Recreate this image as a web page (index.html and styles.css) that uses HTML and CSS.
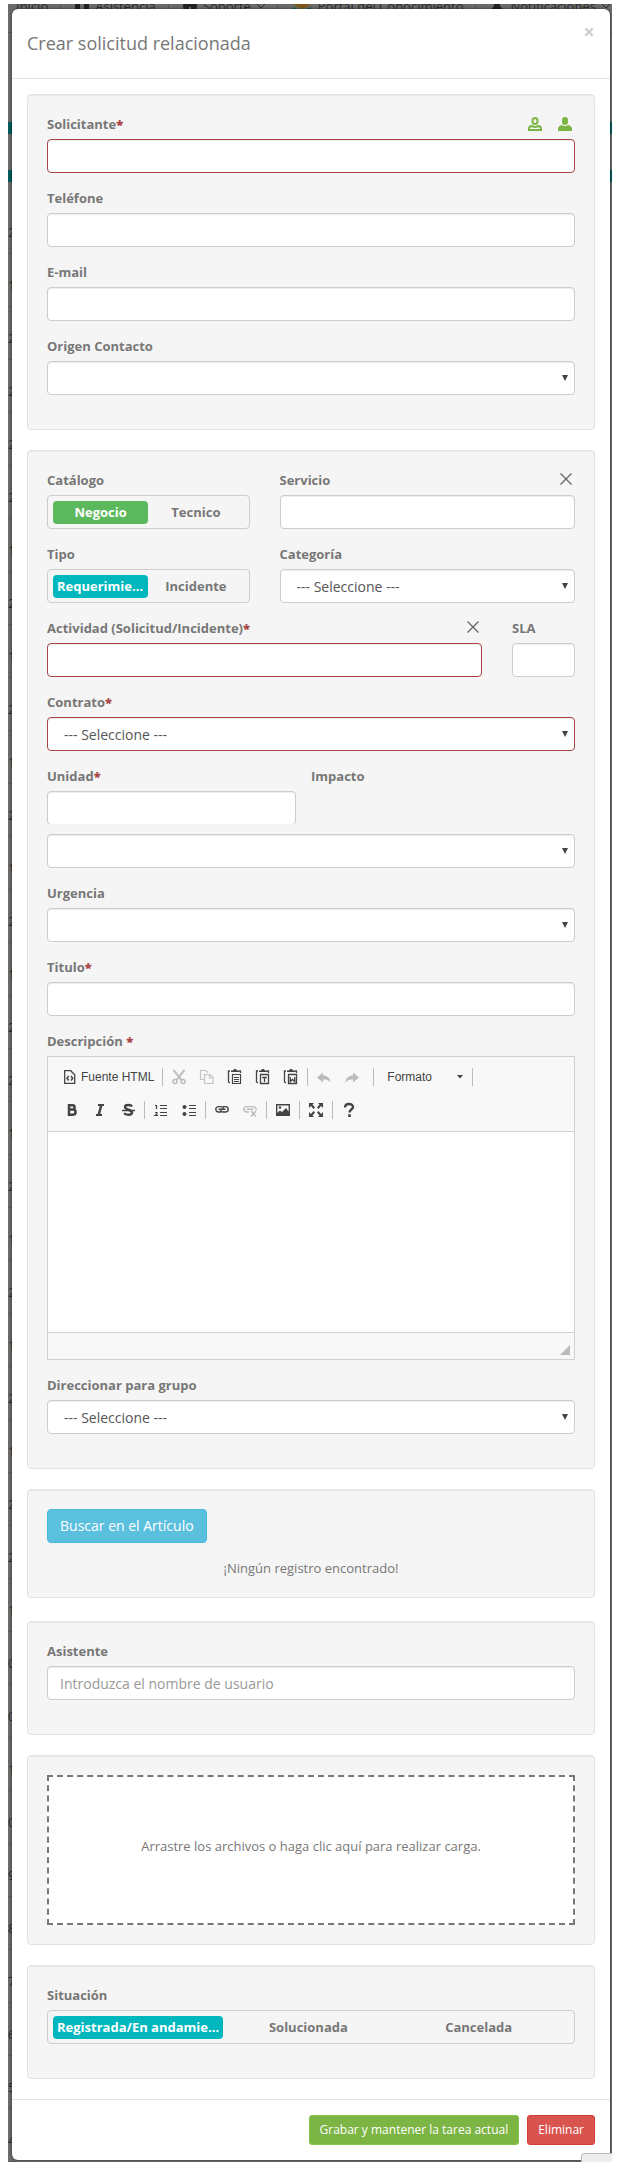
FILE: index.html
```html
<!DOCTYPE html>
<html lang="es">
<head>
<meta charset="utf-8">
<meta name="viewport" content="width=device-width, initial-scale=1">
<title>Crear solicitud relacionada</title>
<link rel="stylesheet" href="styles.css">
</head>
<body>
<div class="screen">
  <div class="backdrop" aria-hidden="true">
    <div class="nav">
      <span class="nav-item">Inicio</span>
      <span class="nav-item"><svg width="14" height="14" viewBox="0 0 14 14"><path d="M0 0h5v14H0zM9 0h5v14H9z" fill="#222"/></svg>Asistencia</span>
      <span class="nav-item"><svg width="14" height="14" viewBox="0 0 14 14"><circle cx="7" cy="7" r="7" fill="#222"/><path d="M7 8v4" stroke="#777" stroke-width="2"/></svg>Soporte<svg width="8" height="5" viewBox="0 0 8 5"><path d="M0 0l4 4 4-4" fill="none" stroke="#2b2b2b"/></svg></span>
      <span class="nav-item"><svg width="20" height="14" viewBox="0 0 20 14"><path d="M1 6l9 4 9-4-9-3z" fill="#7c5a1c"/><path d="M1 8l9 4 9-4v2l-9 4-9-4z" fill="#1a5c4a"/></svg>Portal del Conocimiento</span>
      <span class="nav-item"><svg width="14" height="14" viewBox="0 0 14 14"><path d="M4 0h6v7l4 5H0l4-5z" fill="#222"/></svg>Notificaciones<svg width="8" height="5" viewBox="0 0 8 5"><path d="M0 0l4 4 4-4" fill="none" stroke="#2b2b2b"/></svg></span>
    </div>
    <div class="band"></div>
    <div class="band"></div>
    <div class="rows">
      <span>2</span><span>1</span><span>2</span><span>2</span><span>2</span><span>2</span><span>1</span><span>2</span><span>1</span><span>2</span><span>1</span><span>2</span><span>1</span><span>2</span><span>1</span><span>2</span><span>2</span><span>1</span><span>2</span><span>1</span><span>2</span><span>1</span><span>2</span><span>1</span><span>2</span><span>2</span><span>1</span><span>0</span><span>0</span><span>1</span><span>0</span><span>9</span><span>8</span><span>7</span><span>6</span><span>5</span><span>4</span>
    </div>
  </div>

  <main class="modal" role="dialog" aria-labelledby="title">
    <header class="modal-header">
      <h1 id="title">Crear solicitud relacionada</h1>
      <button class="close" type="button" aria-label="Cerrar">×</button>
    </header>

    <form class="modal-body">
      <section class="well">
        <div class="field">
          <div class="label-row">
            <label for="solicitante">Solicitante<b class="req">*</b></label>
            <span class="tools">
              <button type="button" class="icon-btn" aria-label="Nuevo solicitante"><svg width="14" height="14" viewBox="0 0 14 14" fill="none" stroke="#7cb544" stroke-width="2"><rect x="4.5" y="1" width="5" height="6" rx="2.5"/><path d="M1 13v-1.500c0-1.500 1.500-2.500 3-2.500.8.700 1.800 1 3 1s2.200-.3 3-1c1.500 0 3 1 3 2.500V13z"/></svg></button>
              <button type="button" class="icon-btn" aria-label="Ver solicitante"><svg width="14" height="14" viewBox="0 0 14 14" fill="#7cb544"><rect x="4" y="0" width="6" height="8" rx="3"/><path d="M0 14v-2c0-2 1.500-3.500 4-4 .8.800 1.800 1 3 1s2.200-.2 3-1c2.500.5 4 2 4 4v2z"/></svg></button>
            </span>
          </div>
          <input class="control invalid" id="solicitante" type="text">
        </div>
        <div class="field">
          <label for="telefono">Teléfone</label>
          <input class="control" id="telefono" type="text">
        </div>
        <div class="field">
          <label for="email">E-mail</label>
          <input class="control" id="email" type="text">
        </div>
        <div class="field">
          <label for="origen">Origen Contacto</label>
          <div class="select"><select class="control" id="origen"><option></option></select></div>
        </div>
      </section>

      <section class="well">
        <div class="grid">
          <fieldset class="field span-5">
            <legend>Catálogo</legend>
            <div class="switch halves">
              <label><input type="radio" name="catalogo" checked><span class="green">Negocio</span></label>
              <label><input type="radio" name="catalogo"><span>Tecnico</span></label>
            </div>
          </fieldset>
          <div class="field span-7">
            <div class="label-row">
              <label for="servicio">Servicio</label>
              <button type="button" class="icon-btn clear" aria-label="Limpiar servicio"><svg width="12" height="12" viewBox="0 0 12 12" stroke="#666" stroke-width="1.300"><path d="M.5.500l11 11M11.500.500l-11 11"/></svg></button>
            </div>
            <input class="control" id="servicio" type="text">
          </div>
          <fieldset class="field span-5">
            <legend>Tipo</legend>
            <div class="switch halves">
              <label><input type="radio" name="tipo" checked><span class="teal">Requerimiento</span></label>
              <label><input type="radio" name="tipo"><span>Incidente</span></label>
            </div>
          </fieldset>
          <div class="field span-7">
            <label for="categoria">Categoría</label>
            <div class="select"><select class="control" id="categoria"><option>--- Seleccione ---</option></select></div>
          </div>
          <div class="field span-10">
            <div class="label-row">
              <label for="actividad">Actividad (Solicitud/Incidente)<b class="req">*</b></label>
              <button type="button" class="icon-btn clear" aria-label="Limpiar actividad"><svg width="12" height="12" viewBox="0 0 12 12" stroke="#666" stroke-width="1.300"><path d="M.5.500l11 11M11.500.500l-11 11"/></svg></button>
            </div>
            <input class="control invalid" id="actividad" type="text">
          </div>
          <div class="field span-2">
            <label for="sla">SLA</label>
            <input class="control" id="sla" type="text">
          </div>
        </div>
        <div class="field">
          <label for="contrato">Contrato<b class="req">*</b></label>
          <div class="select"><select class="control invalid" id="contrato"><option>--- Seleccione ---</option></select></div>
        </div>
        <div class="grid unit-row">
          <div class="span-6">
            <label for="unidad">Unidad<b class="req">*</b></label>
            <div class="clip"><input class="control" id="unidad" type="text"></div>
          </div>
          <label class="span-6 impact" for="impacto">Impacto</label>
        </div>
        <div class="field">
          <div class="select"><select class="control" id="impacto"><option></option></select></div>
        </div>
        <div class="field">
          <label for="urgencia">Urgencia</label>
          <div class="select"><select class="control" id="urgencia"><option></option></select></div>
        </div>
        <div class="field">
          <label for="titulo">Titulo<b class="req">*</b></label>
          <input class="control" id="titulo" type="text">
        </div>
        <div class="field">
          <label for="descripcion">Descripción <b class="req">*</b></label>
          <div class="editor">
            <div class="toolbar">
              <div class="tools-row">
                <button type="button" class="tool source"><svg viewBox="0 0 16 16"><path d="M.7 1.700h6l4 4v8.600H.7z" fill="none" stroke="#444" stroke-width="1.300"/><path d="M4.700 7L3 9.200l1.700 2.300M7 7l1.700 2.200L7 11.500" fill="none" stroke="#444" stroke-width="1.500"/></svg>Fuente HTML</button>
                <i class="sep"></i>
                <button type="button" class="tool" aria-label="Cortar" disabled><svg viewBox="0 0 16 16"><path d="M2.500 1l8 10M13.500 1l-8 10" fill="none" stroke="#bbb" stroke-width="2"/><circle cx="4" cy="12.500" r="2" fill="none" stroke="#bbb" stroke-width="1.500"/><circle cx="12" cy="12.500" r="2" fill="none" stroke="#bbb" stroke-width="1.500"/></svg></button>
                <button type="button" class="tool" aria-label="Copiar" disabled><svg viewBox="0 0 16 16"><path d="M5 10.500H1.500v-9H7l2 2M5.500 5.500H11l3 3v6H5.500zM10.500 5.500v3.500H14" fill="none" stroke="#c4c4c4" stroke-width="1.200"/></svg></button>
                <button type="button" class="tool" aria-label="Pegar"><svg viewBox="0 0 16 16"><path d="M3 2H1.500v11L3 14M12 2h1.500v2" fill="none" stroke="#444" stroke-width="1.300"/><path d="M4 3V1.500h2L7 0h2l1 1.500h2V3z" fill="#444"/><path d="M5.500 5.500h8v9h-8zM7 8.500h5M7 10.500h5M7 12.500h5" fill="none" stroke="#444" stroke-width="1.200"/></svg></button>
                <button type="button" class="tool" aria-label="Pegar como texto"><svg viewBox="0 0 16 16"><path d="M3 2H1.500v11L3 14M12 2h1.500v2" fill="none" stroke="#444" stroke-width="1.300"/><path d="M4 3V1.500h2L7 0h2l1 1.500h2V3z" fill="#444"/><path d="M5.500 5.500h8v9h-8zM7.200 8.500h4.600M9.500 8.500V13" fill="none" stroke="#444" stroke-width="1.300"/></svg></button>
                <button type="button" class="tool" aria-label="Pegar desde Word"><svg viewBox="0 0 16 16"><path d="M3 2H1.500v11L3 14M12 2h1.500v2" fill="none" stroke="#444" stroke-width="1.300"/><path d="M4 3V1.500h2L7 0h2l1 1.500h2V3z" fill="#444"/><path d="M5.500 5.500h8v9h-8zM7.300 8v4.500l2.200-2 2.200 2V8" fill="none" stroke="#444" stroke-width="1.300"/></svg></button>
                <i class="sep"></i>
                <button type="button" class="tool" aria-label="Deshacer" disabled><svg viewBox="0 0 16 16"><path d="M1 8.500l6-5v3c4 0 7 2 7.500 7-2-2.500-4-3-7.500-3v3z" fill="#bbb"/></svg></button>
                <button type="button" class="tool" aria-label="Rehacer" disabled><svg viewBox="0 0 16 16"><path d="M15 8.500l-6-5v3c-4 0-7 2-7.500 7 2-2.500 4-3 7.500-3v3z" fill="#bbb"/></svg></button>
                <i class="sep wide"></i>
                <button type="button" class="combo">Formato<svg width="6" height="4" viewBox="0 0 6 4"><path d="M0 0h6L3 3.500z" fill="#444"/></svg></button>
                <i class="sep"></i>
              </div>
              <div class="tools-row">
                <button type="button" class="tool" aria-label="Negrita"><svg viewBox="0 0 16 16"><path d="M5 3.200h3.500a2 2 0 0 1 0 4.300H5h4a2.500 2.500 0 0 1 0 5.200H5z" fill="none" stroke="#444" stroke-width="2.500"/></svg></button>
                <button type="button" class="tool" aria-label="Cursiva"><svg viewBox="0 0 16 16"><path d="M6 3h6M4 13h6" stroke="#444" stroke-width="1.800"/><path d="M9.300 3L6.700 13" stroke="#444" stroke-width="2.500"/></svg></button>
                <button type="button" class="tool" aria-label="Tachado"><svg viewBox="0 0 16 16"><path d="M12 4.500C11 2.500 5 2.300 5 5c0 3 7 2.500 7 5.500 0 3-6.500 3-7.800.5" fill="none" stroke="#444" stroke-width="2.400"/><path d="M2 8.500h13" stroke="#444" stroke-width="1.500"/></svg></button>
                <i class="sep"></i>
                <button type="button" class="tool" aria-label="Lista numerada"><svg viewBox="0 0 16 16"><path d="M7 3.500h7M7 6.500h7M7 10.500h7M7 13.500h7M2 3.500h1.500V7M2 10.500h2v1.500l-2 1.500h3" fill="none" stroke="#444" stroke-width="1.200"/></svg></button>
                <button type="button" class="tool" aria-label="Lista con viñetas"><svg viewBox="0 0 16 16"><path d="M8 3.500h7M8 6.500h7M8 10.500h7M8 13.500h7" stroke="#444" stroke-width="1.200"/><circle cx="3.500" cy="5" r="2" fill="#444"/><circle cx="3.500" cy="12" r="2" fill="#444"/></svg></button>
                <i class="sep"></i>
                <button type="button" class="tool" aria-label="Vínculo"><svg viewBox="0 0 16 16"><path d="M7 10H4.500a2.700 2.700 0 0 1 0-5.400H7c1.500 0 2.200 1 2.200 2M9 4.600h2.500a2.700 2.700 0 0 1 0 5.400H9c-1.500 0-2.200-1-2.200-2M4.500 7.300h7" fill="none" stroke="#444" stroke-width="1.400"/></svg></button>
                <button type="button" class="tool" aria-label="Quitar vínculo" disabled><svg viewBox="0 0 16 16"><path d="M7 10H4.500a2.700 2.700 0 0 1 0-5.400h7a2.700 2.700 0 0 1 2.500 3.500M4.500 7.300h7" fill="none" stroke="#bbb" stroke-width="1.400"/><path d="M9 9l5 5.500M14 9l-5 5.500" stroke="#bbb" stroke-width="1.500"/></svg></button>
                <i class="sep"></i>
                <button type="button" class="tool" aria-label="Imagen"><svg viewBox="0 0 16 16"><path d="M1.700 2.700h12.600v10.600H1.700z" fill="none" stroke="#444" stroke-width="1.400"/><path d="M2 13v-2l3-2.500 2 1.500 4-4 3 4v3z" fill="#444"/><circle cx="5" cy="5.500" r="1.200" fill="#444"/></svg></button>
                <i class="sep"></i>
                <button type="button" class="tool" aria-label="Maximizar"><svg viewBox="0 0 16 16"><path d="M1 1h5L4.500 2.500 7 5.500 5.500 7 3 4 1 6zM15 1v5l-2-2-2.500 3L9 5.500l2.500-3L10 1zM1 15v-5l2 2 2.500-3L7 10.500l-2.500 3L6 15zM15 15h-5l1.500-1.500L9 10.500 10.500 9l2.500 3 2-2z" fill="#444"/></svg></button>
                <i class="sep"></i>
                <button type="button" class="tool" aria-label="Ayuda"><svg viewBox="0 0 16 16"><path d="M4 5.500C4 1 12 1 12 5c0 2.500-3.500 2.500-3.500 5.500" fill="none" stroke="#444" stroke-width="2.400"/><path d="M7.200 12.200h2.600V15H7.200z" fill="#444"/></svg></button>
              </div>
            </div>
            <textarea class="editor-text" id="descripcion"></textarea>
            <div class="editor-foot"><svg width="10" height="10" viewBox="0 0 10 10"><path d="M10 0v10H0z" fill="#bbb"/></svg></div>
          </div>
        </div>
        <div class="field">
          <label for="grupo">Direccionar para grupo</label>
          <div class="select"><select class="control" id="grupo"><option>--- Seleccione ---</option></select></div>
        </div>
      </section>

      <section class="well articles">
        <button type="button" class="btn info">Buscar en el Artículo</button>
        <p class="empty">¡Ningún registro encontrado!</p>
      </section>

      <section class="well">
        <div class="field">
          <label for="asistente">Asistente</label>
          <input class="control" id="asistente" type="text" placeholder="Introduzca el nombre de usuario">
        </div>
      </section>

      <section class="well">
        <button type="button" class="dropzone">Arrastre los archivos o haga clic aquí para realizar carga.</button>
      </section>

      <section class="well">
        <fieldset class="field">
          <legend>Situación</legend>
          <div class="switch thirds">
            <label><input type="radio" name="situacion" checked><span class="teal">Registrada/En andamiento</span></label>
            <label><input type="radio" name="situacion"><span>Solucionada</span></label>
            <label><input type="radio" name="situacion"><span>Cancelada</span></label>
          </div>
        </fieldset>
      </section>
    </form>

    <footer class="modal-footer">
      <button type="button" class="btn small success">Grabar y mantener la tarea actual</button>
      <button type="button" class="btn small danger">Eliminar</button>
    </footer>
  </main>
  <div class="corner" aria-hidden="true"></div>
</div>
</body>
</html>
```
FILE: styles.css
```css
* { box-sizing: border-box; }

body {
  margin: 0;
  padding: 4px 8px 6px;
  background: #fff;
  color: #777;
  font: 13px/20px "Open Sans", "Noto Sans", sans-serif;
}

button, input, select, textarea { font: inherit; color: inherit; }
button { margin: 0; padding: 0; border: 0; background: none; cursor: pointer; }

/* dimmed page behind the dialog */
.screen {
  position: relative;
  overflow: hidden;
  padding: 5px 2px 2px 4px;
  background: #6b6b6b;
}
.backdrop {
  position: absolute;
  inset: 0;
  overflow: hidden;
  color: #2b2b2b;
}
.nav {
  display: flex;
  height: 37px;
  margin-top: -8px;
  padding-left: 8px;
  border-bottom: 1px solid #555;
  white-space: nowrap;
}
.nav-item {
  display: flex;
  flex: none;
  align-items: center;
  gap: 6px;
  height: 20px;
  margin-right: 14px;
  padding-right: 12px;
  border-right: 1px solid #555;
}
.band { height: 12px; margin-top: 89px; background: #005a5c; }
.band + .band { margin-top: 36px; }
.rows {
  display: flex;
  flex-direction: column;
  justify-content: space-between;
  width: 8px;
  height: calc(100% - 178px);
  padding-top: 40px;
}
.rows span { border-bottom: 1px solid #5c5c5c; height: 32px; }

/* dialog */
.modal {
  position: relative;
  background: #fff;
  border-radius: 6px;
  box-shadow: 0 0 3px rgba(0, 0, 0, .6);
}
.modal-header {
  display: flex;
  justify-content: space-between;
  align-items: flex-start;
  padding: 14px 15px 15px;
  border-bottom: 1px solid #e5e5e5;
}
h1 { margin: 0; font-size: 18px; font-weight: 400; line-height: 40px; }
.close { width: 12px; color: #ccc; font-size: 20px; font-weight: 700; line-height: 18px; }
.modal-body { padding: 15px 15px 20px; }
.modal-footer {
  display: flex;
  justify-content: flex-end;
  gap: 8px;
  padding: 15px;
  border-top: 1px solid #e5e5e5;
}

.well {
  margin-bottom: 20px;
  padding: 19px;
  background: #f5f5f5;
  border: 1px solid #e3e3e3;
  border-radius: 4px;
  box-shadow: inset 0 1px 1px rgba(0, 0, 0, .05);
}
.well:last-child { margin-bottom: 0; }
.articles { margin-bottom: 23px; }

/* form fields */
.field { min-width: 0; margin: 0 0 15px; padding: 0; border: 0; }
label, legend {
  display: block;
  margin-bottom: 5px;
  padding: 0;
  font-weight: 700;
}
.req { color: #a94442; }
.label-row { display: flex; justify-content: space-between; }
.tools { display: flex; gap: 16px; padding-right: 3px; }
.icon-btn { display: flex; align-items: center; height: 20px; }
.clear { height: 18px; padding-right: 3px; }
.control {
  display: block;
  width: 100%;
  height: 34px;
  padding: 6px 12px;
  background: #fff;
  border: 1px solid #ccc;
  border-radius: 4px;
  box-shadow: inset 0 1px 1px rgba(0, 0, 0, .075);
  color: #555;
  font-size: 14px;
  line-height: 20px;
}
.control::placeholder { color: #999; }
.invalid { border-color: #a94442; }
.select { position: relative; }
.select .control { appearance: none; padding: 7px 16px 5px; }
.select::after {
  content: "";
  position: absolute;
  top: 14px;
  right: 7px;
  border: solid transparent;
  border-width: 6px 3px 0;
  border-top-color: #444;
  pointer-events: none;
}
.grid { display: grid; grid-template-columns: repeat(12, minmax(0, 1fr)); column-gap: 30px; }
.span-2 { grid-column: span 2; }
.span-5 { grid-column: span 5; }
.span-6 { grid-column: span 6; }
.span-7 { grid-column: span 7; }
.span-10 { grid-column: span 10; }
.unit-row { margin-bottom: 10px; }
.clip { height: 33px; overflow: hidden; }
.impact { margin-left: -15px; }

/* segmented radio switch */
.switch {
  display: grid;
  height: 34px;
  padding: 5px;
  border: 1px solid #ccc;
  border-radius: 4px;
}
.halves { grid-template-columns: 50% 50%; }
.thirds { grid-template-columns: 33% 33% 33%; }
.switch label { position: relative; margin: 0; text-align: center; }
.switch input { position: absolute; margin: 0; opacity: 0; }
.switch span {
  display: block;
  height: 23px;
  padding: 0 4px;
  overflow: hidden;
  border-radius: 4px;
  line-height: 23px;
  text-overflow: ellipsis;
  white-space: nowrap;
}
.switch :checked + span { color: #fff; }
.switch .green { background: #5cb85c; }
.switch .teal { background: #00b7bd; }

/* rich text editor */
.editor { border: 1px solid #d1d1d1; background: #f8f8f8; }
.toolbar { display: grid; row-gap: 5px; padding: 6px 10px 7px; border-bottom: 1px solid #d1d1d1; }
.tools-row { display: flex; align-items: center; height: 28px; }
.tool { display: flex; align-items: center; padding: 6px; }
.tool svg { width: 16px; height: 16px; }
.source, .combo { color: #444; font: 12px/16px "Liberation Sans", Arial, sans-serif; }
.source { gap: 1px; }
.sep { width: 1px; height: 18px; margin: 0 2px; background: #bcbcbc; }
.sep.wide { margin-left: 7px; }
.combo { display: flex; align-items: center; justify-content: space-between; width: 94px; padding: 0 7px 0 11px; }
.editor-text { display: block; width: 100%; height: 200px; padding: 12px; border: 0; background: #fff; resize: none; outline: 0; }
.editor-foot { display: flex; justify-content: flex-end; height: 27px; padding: 12px 4px 0 0; border-top: 1px solid #d1d1d1; }

/* buttons */
.btn {
  padding: 6px 12px;
  border: 1px solid;
  border-radius: 4px;
  color: #fff;
  font-size: 14px;
  line-height: 20px;
}
.small { padding: 5px 10px; border-radius: 3px; font-size: 12px; line-height: 18px; }
.info { background: #5bc0de; border-color: #46b8da; }
.success { background: #7cb544; border-color: #85c44a; }
.danger { background: #d9534f; border-color: #d43f3a; }
.empty { margin: 15px 0 0; text-align: center; }
.dropzone {
  display: block;
  width: 100%;
  height: 150px;
  padding-bottom: 8px;
  background: #fff;
  border: 2px dashed #777;
}
.corner {
  position: absolute;
  right: 0;
  bottom: 0;
  width: 31px;
  height: 9px;
  background: #eee;
  border: 1px solid #bbb;
  border-width: 1px 0 0 1px;
  border-radius: 4px 0 0;
}
```
